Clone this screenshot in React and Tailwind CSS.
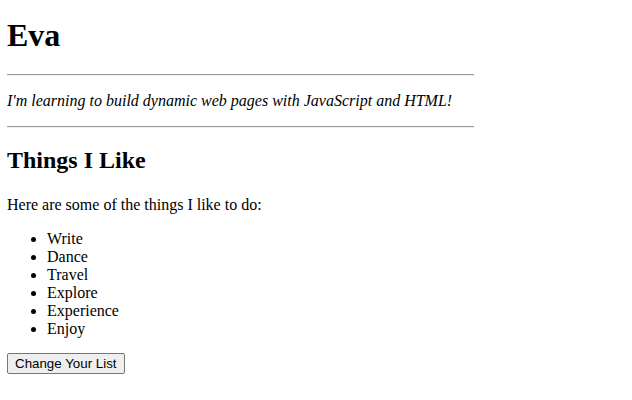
export default function App() {
  const items = ["Write", "Dance", "Travel", "Explore", "Experience", "Enjoy"];
  return (
    <div className="pl-[7px] pr-2 py-2 text-black bg-white" style={{ fontFamily: '"Liberation Serif", serif' }}>
      <div className="w-[467px]">
        <h1 className="text-[32px] font-bold leading-[normal] mt-[9px] mb-[20px]">Eva</h1>
        <hr className="border-0 border-t border-t-[#9a9a9a] border-b border-b-[#eeeeee] h-0" />
        <p className="italic text-[16px] leading-[normal] my-[16px]">I'm learning to build dynamic web pages with JavaScript and HTML!</p>
        <hr className="border-0 border-t border-t-[#9a9a9a] border-b border-b-[#eeeeee] h-0" />
        <h2 className="text-[24px] font-bold leading-[normal] mt-[19px] mb-[22px]">Things I Like</h2>
        <p className="text-[16px] leading-[normal] my-[16px]">Here are some of the things I like to do:</p>
        <ul className="list-disc pl-10 mt-[16px] mb-[13px] text-[16px] leading-[normal]">
          {items.map((i) => (
            <li key={i}>{i}</li>
          ))}
        </ul>
        <button
          className="text-[13.33px] px-[7px] py-[2px] bg-[#efefef] border border-[#767676] rounded-[2px] leading-[normal] text-black"
          style={{ fontFamily: '"Liberation Sans", Arial, sans-serif' }}
        >
          Change Your List
        </button>
      </div>
    </div>
  );
}
